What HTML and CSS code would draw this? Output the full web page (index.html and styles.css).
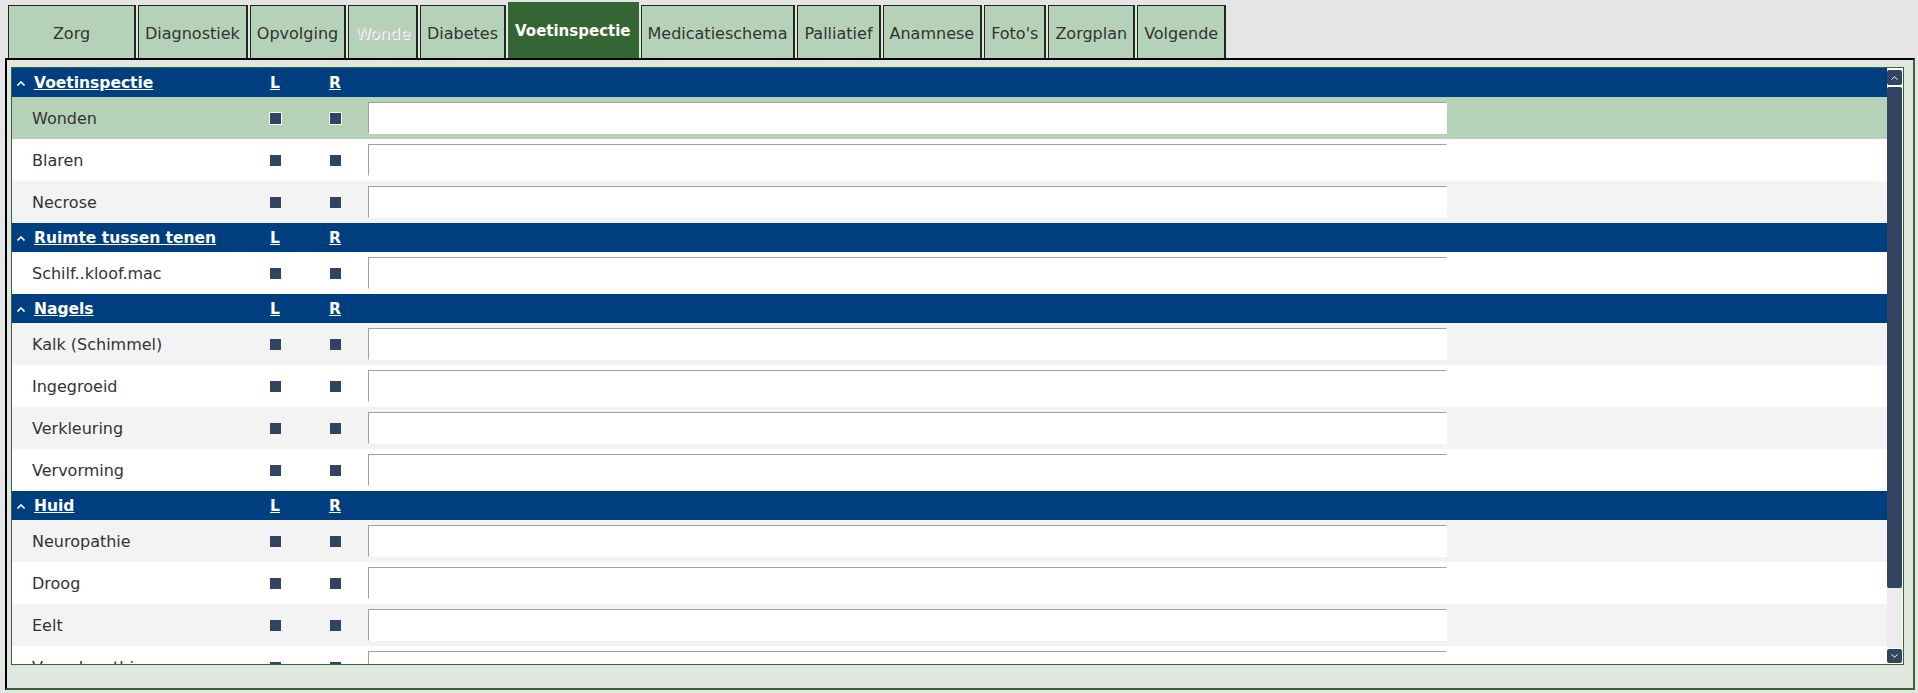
FILE: index.html
```html
<!DOCTYPE html>
<html lang="nl">
<head>
    <meta charset="UTF-8">
    <title>Voetinspectie</title>
    <link rel="stylesheet" href="styles.css">
</head>
<body>
    <div class="tabs">
        <div class="tab tab-wide">Zorg</div>
        <div class="tab">Diagnostiek</div>
        <div class="tab">Opvolging</div>
        <div class="tab disabled">Wonde</div>
        <div class="tab">Diabetes</div>
        <div class="tab selected">Voetinspectie</div>
        <div class="tab">Medicatieschema</div>
        <div class="tab">Palliatief</div>
        <div class="tab">Anamnese</div>
        <div class="tab">Foto's</div>
        <div class="tab">Zorgplan</div>
        <div class="tab">Volgende</div>
    </div>

    <div class="frame">
        <div class="panel">
            <div class="list">
                <div class="group-head">
                    <span class="head-title"><span class="caret"><svg width="8" height="5" viewBox="0 0 8 5"><path d="M0.5 4.5 L4 1 L7.5 4.5" fill="none" stroke="#fff" stroke-width="1.6"/></svg></span><a>Voetinspectie</a></span>
                    <a class="side">L</a>
                    <a class="side">R</a>
                </div>
                <div class="row current">
                    <span class="label">Wonden</span>
                    <span class="cell"><i class="box"></i></span>
                    <span class="cell"><i class="box"></i></span>
                    <input class="note" type="text">
                </div>
                <div class="row">
                    <span class="label">Blaren</span>
                    <span class="cell"><i class="box"></i></span>
                    <span class="cell"><i class="box"></i></span>
                    <input class="note" type="text">
                </div>
                <div class="row alt">
                    <span class="label">Necrose</span>
                    <span class="cell"><i class="box"></i></span>
                    <span class="cell"><i class="box"></i></span>
                    <input class="note" type="text">
                </div>

                <div class="group-head">
                    <span class="head-title"><span class="caret"><svg width="8" height="5" viewBox="0 0 8 5"><path d="M0.5 4.5 L4 1 L7.5 4.5" fill="none" stroke="#fff" stroke-width="1.6"/></svg></span><a>Ruimte tussen tenen</a></span>
                    <a class="side">L</a>
                    <a class="side">R</a>
                </div>
                <div class="row">
                    <span class="label">Schilf..kloof.mac</span>
                    <span class="cell"><i class="box"></i></span>
                    <span class="cell"><i class="box"></i></span>
                    <input class="note" type="text">
                </div>

                <div class="group-head">
                    <span class="head-title"><span class="caret"><svg width="8" height="5" viewBox="0 0 8 5"><path d="M0.5 4.5 L4 1 L7.5 4.5" fill="none" stroke="#fff" stroke-width="1.6"/></svg></span><a>Nagels</a></span>
                    <a class="side">L</a>
                    <a class="side">R</a>
                </div>
                <div class="row alt">
                    <span class="label">Kalk (Schimmel)</span>
                    <span class="cell"><i class="box"></i></span>
                    <span class="cell"><i class="box"></i></span>
                    <input class="note" type="text">
                </div>
                <div class="row">
                    <span class="label">Ingegroeid</span>
                    <span class="cell"><i class="box"></i></span>
                    <span class="cell"><i class="box"></i></span>
                    <input class="note" type="text">
                </div>
                <div class="row alt">
                    <span class="label">Verkleuring</span>
                    <span class="cell"><i class="box"></i></span>
                    <span class="cell"><i class="box"></i></span>
                    <input class="note" type="text">
                </div>
                <div class="row">
                    <span class="label">Vervorming</span>
                    <span class="cell"><i class="box"></i></span>
                    <span class="cell"><i class="box"></i></span>
                    <input class="note" type="text">
                </div>

                <div class="group-head">
                    <span class="head-title"><span class="caret"><svg width="8" height="5" viewBox="0 0 8 5"><path d="M0.5 4.5 L4 1 L7.5 4.5" fill="none" stroke="#fff" stroke-width="1.6"/></svg></span><a>Huid</a></span>
                    <a class="side">L</a>
                    <a class="side">R</a>
                </div>
                <div class="row alt">
                    <span class="label">Neuropathie</span>
                    <span class="cell"><i class="box"></i></span>
                    <span class="cell"><i class="box"></i></span>
                    <input class="note" type="text">
                </div>
                <div class="row">
                    <span class="label">Droog</span>
                    <span class="cell"><i class="box"></i></span>
                    <span class="cell"><i class="box"></i></span>
                    <input class="note" type="text">
                </div>
                <div class="row alt">
                    <span class="label">Eelt</span>
                    <span class="cell"><i class="box"></i></span>
                    <span class="cell"><i class="box"></i></span>
                    <input class="note" type="text">
                </div>
                <div class="row">
                    <span class="label">Vasculopathie</span>
                    <span class="cell"><i class="box"></i></span>
                    <span class="cell"><i class="box"></i></span>
                    <input class="note" type="text">
                </div>
            </div>

            <div class="scrollbar">
                <div class="sb-btn"><svg width="7" height="4" viewBox="0 0 7 4"><path d="M0.5 3.5 L3.5 0.8 L6.5 3.5" fill="none" stroke="#fff" stroke-width="1"/></svg></div>
                <div class="sb-track"><div class="sb-thumb"></div></div>
                <div class="sb-btn sb-down"><svg width="7" height="4" viewBox="0 0 7 4"><path d="M0.5 0.5 L3.5 3.2 L6.5 0.5" fill="none" stroke="#fff" stroke-width="1"/></svg></div>
            </div>
        </div>
    </div>
</body>
</html>
```

FILE: styles.css
```css
body {
    margin: 0;
    background: #e5e5e5;
    font-family: "DejaVu Sans", Verdana, sans-serif;
    color: #333;
    height: 693px;
    overflow: hidden;
}

/* tab strip */
.tabs {
    display: flex;
    align-items: flex-end;
    gap: 2px;
    padding: 2px 0 0 8px;
    height: 56px;
}
.tab {
    box-sizing: border-box;
    height: 53px;
    padding: 3px 6px 0 6px;
    display: flex;
    align-items: center;
    justify-content: center;
    background: #b5d2b9;
    border: 1px solid #1c2b1c;
    border-right-width: 2px;
    border-bottom: none;
    font-size: 16px;
    color: #333;
    white-space: nowrap;
}
.tab-wide {
    min-width: 128px;
}
.tab.disabled {
    color: #c9c9c9;
    text-shadow: 1px 1px 0 #fff;
}
.tab.selected {
    height: 56px;
    background: #336633;
    border-color: #336633;
    color: #fff;
    font-weight: bold;
    font-size: 15px;
    padding-top: 0;
}

/* outer frame */
.frame {
    box-sizing: border-box;
    margin-left: 5px;
    width: 1910px;
    height: 632px;
    background: #e0e6e0;
    border: 2px solid #000;
    border-right-color: #336633;
    border-bottom-color: #336633;
    padding: 7px 9px 23px 4px;
}
.panel {
    box-sizing: border-box;
    height: 598px;
    border: 1px solid #336633;
    background: #fff;
    display: flex;
}
.list {
    flex: 1;
    overflow: hidden;
}

/* group headers */
.group-head {
    height: 29px;
    background: #003f7f;
    display: grid;
    grid-template-columns: 228px 60px 60px;
    align-items: center;
    padding-left: 5px;
    color: #fff;
    font-weight: bold;
    font-size: 15.5px;
}
.group-head a {
    text-decoration: underline;
    color: #fff;
}
.head-title {
    display: flex;
    align-items: center;
}
.caret {
    width: 17px;
    display: flex;
    align-items: center;
    padding-top: 1px;
}
.side {
    text-align: center;
}

/* rows */
.row {
    height: 42px;
    display: grid;
    grid-template-columns: 213px 60px 60px 1079px;
    align-items: center;
    padding-left: 20px;
    background: #fff;
    font-size: 16px;
    color: #333;
}
.row.alt {
    background: #f3f3f3;
}
.row.current {
    background: #b5d2b9;
}
.cell {
    display: flex;
    justify-content: center;
}
.box {
    display: block;
    width: 11px;
    height: 11px;
    background: #334460;
}
.row.current .box {
    box-shadow: 0 0 0 1px #fff;
}
.note {
    box-sizing: border-box;
    margin: 0 0 0 3px;
    width: 1079px;
    height: 32px;
    border: 1px solid #fff;
    border-top-color: #a0a0a0;
    border-left-color: #a0a0a0;
    background: #fff;
    padding: 0 4px;
    font: 16px "DejaVu Sans", sans-serif;
}

/* scrollbar */
.scrollbar {
    width: 16px;
    display: flex;
    flex-direction: column;
    background: #fff;
    padding: 2px 1px 1px 0;
    box-sizing: border-box;
}
.sb-btn {
    width: 15px;
    height: 15px;
    background: #334460;
    border-radius: 2px;
    display: flex;
    align-items: center;
    justify-content: center;
}
.sb-down {
    height: 14px;
}
.sb-track {
    flex: 1;
    margin: 2px 0 1px;
    background: #ececec;
}
.sb-thumb {
    height: 501px;
    background: #334460;
    border-radius: 2px;
}
```
